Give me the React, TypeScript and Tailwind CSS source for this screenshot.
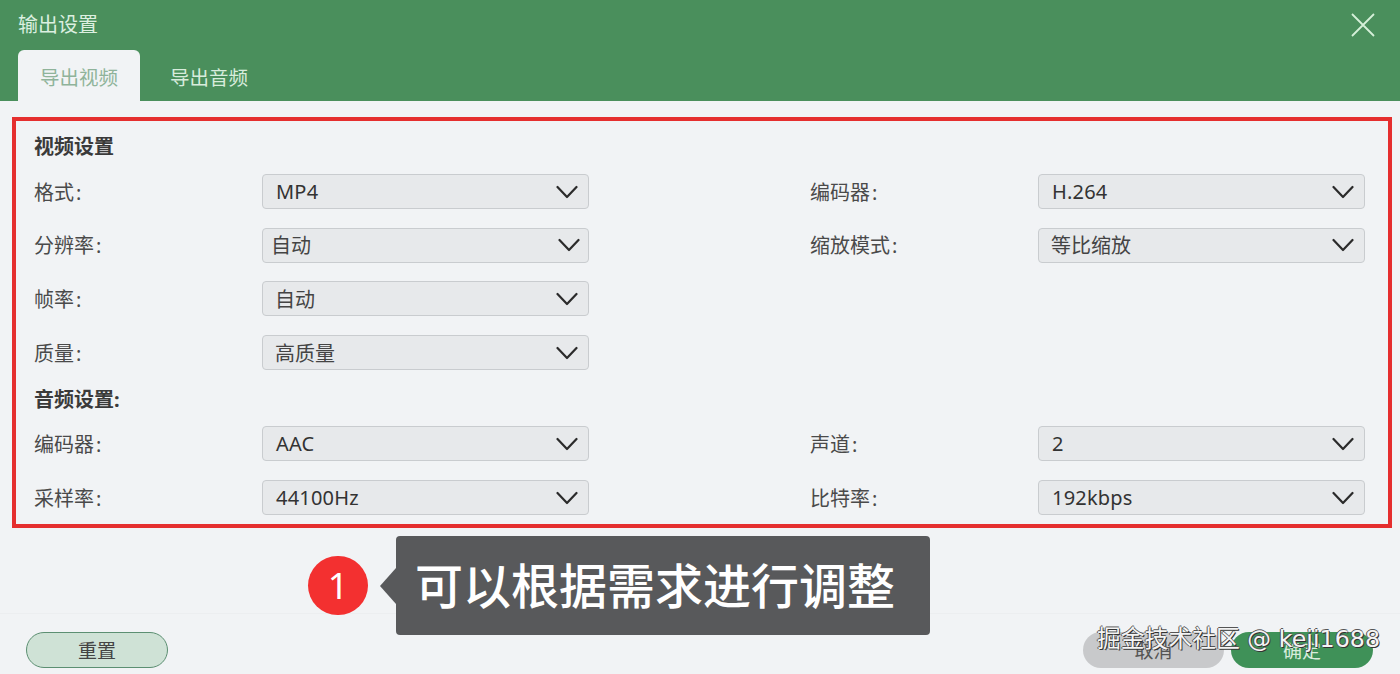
import React from "react";

const cjk = "font-['Noto_Sans','Noto_Sans_CJK_SC',sans-serif]";

function Chevron() {
  return (
    <svg width="22" height="14" viewBox="0 0 22 14" fill="none" className="shrink-0">
      <path d="M1.5 2 L11 12 L20.5 2" stroke="#2b2b2b" strokeWidth="2.2" strokeLinecap="round" strokeLinejoin="round" />
    </svg>
  );
}

function Select({ value, latin, shift }: { value: string; latin?: boolean; shift?: boolean }) {
  return (
    <div className={`flex h-[35px] w-[327px] items-center justify-between rounded-[4px] border border-[#c9cccf] bg-[#e7e9eb] ${shift ? "pl-[8px] pr-[8px]" : latin ? "pl-[13px] pr-[10px]" : "pl-[12px] pr-[10px]"}`}>
      <span className={`text-[20px] leading-none ${latin ? "tracking-[0.2px] text-[#333]" : "pt-[2px] text-[#444]"}`}>{value}</span>
      <Chevron />
    </div>
  );
}

function Field({ label, value, latin, shift }: { label: string; value: string; latin?: boolean; shift?: boolean }) {
  return (
    <div className="flex w-[555px] items-center">
      <span className="w-[228px] pt-[2px] text-[20px] leading-none text-[#4a4a4a]">
        {label}
        <span className="ml-[2px]">:</span>
      </span>
      <Select value={value} latin={latin} shift={shift} />
    </div>
  );
}

function Row({ children }: { children: React.ReactNode }) {
  return <div className="flex h-[35px] gap-[221px]">{children}</div>;
}

export default function App() {
  return (
    <div className={`relative flex h-[674px] w-[1400px] flex-col overflow-hidden bg-[#f1f3f5] ${cjk}`}>
      <header className="flex h-[101px] shrink-0 flex-col bg-[#4a8f5c]">
        <div className="flex h-[50px] items-center justify-between pl-[18px] pr-[25px]">
          <span className="text-[20px] text-[#dcefe0]">输出设置</span>
          <svg width="24" height="24" viewBox="0 0 24 24" fill="none">
            <path d="M1 1 L23 23 M23 1 L1 23" stroke="#d5f0d8" strokeWidth="1.8" />
          </svg>
        </div>
        <div className="flex h-[51px] pl-[18px]">
          <div className="flex h-[51px] w-[122px] items-center justify-center rounded-t-[6px] bg-[#f1f3f5] pt-[4px] text-[19.5px] text-[#8fb39a]">导出视频</div>
          <div className="flex h-[51px] w-[138px] items-center justify-center pt-[4px] text-[19.5px] text-[#d8ecdc]">导出音频</div>
        </div>
      </header>

      <section className="ml-[12px] mt-[16px] flex h-[411px] w-[1380px] flex-col border-[4px] border-[#e52e2e] pl-[18px] pt-[12px]">
        <h2 className="flex h-[26px] items-center pt-[2px] text-[20px] font-bold leading-none text-[#3a3a3a]">视频设置</h2>
        <div className="mt-[15px] flex flex-col gap-[18.7px]">
          <Row>
            <Field label="格式" value="MP4" latin />
            <Field label="编码器" value="H.264" latin />
          </Row>
          <Row>
            <Field label="分辨率" value="自动" shift />
            <Field label="缩放模式" value="等比缩放" />
          </Row>
          <Row>
            <Field label="帧率" value="自动" />
          </Row>
          <Row>
            <Field label="质量" value="高质量" />
          </Row>
        </div>
        <h2 className="mt-[16px] flex h-[26px] items-center pt-[2px] text-[20px] font-bold leading-none text-[#3a3a3a]">音频设置:</h2>
        <div className="mt-[14px] flex flex-col gap-[19px]">
          <Row>
            <Field label="编码器" value="AAC" latin />
            <Field label="声道" value="2" latin />
          </Row>
          <Row>
            <Field label="采样率" value="44100Hz" latin />
            <Field label="比特率" value="192kbps" latin />
          </Row>
        </div>
      </section>

      <footer className="mt-[85px] flex h-[61px] items-start justify-between border-t border-[#eceef0] pl-[26px] pr-[27px] pt-[18px]">
        <button className="flex h-[36px] w-[142px] items-center justify-center rounded-full border border-[#5c8f72] bg-[#cfe2d6] pt-[2px] text-[19px] text-[#444]">重置</button>
        <div className="flex gap-[7px]">
          <button className="flex h-[36px] w-[141px] items-center justify-center rounded-full bg-[#c8c9cb] pt-[2px] text-[19px] text-[#555]">取消</button>
          <button className="flex h-[36px] w-[142px] items-center justify-center rounded-full bg-[#3f9158] pt-[2px] text-[19px] text-[#d8ecdc]">确定</button>
        </div>
      </footer>

      <div className="absolute left-[308px] top-[556px] flex h-[59px] w-[60px] items-center justify-center rounded-full bg-[#f33030] text-[36px] leading-none text-white">1</div>
      <div className="absolute left-[380px] top-[568px] h-0 w-0 border-y-[18px] border-r-[16px] border-y-transparent border-r-[#58595b]" />
      <div className="absolute left-[396px] top-[536px] flex h-[99px] w-[534px] items-center rounded-[4px] bg-[#58595b] pl-[19px] text-[48px] font-medium leading-none text-white">可以根据需求进行调整</div>

      <div className="absolute left-[1097px] top-[624px] whitespace-nowrap font-['DejaVu_Sans','Noto_Sans_CJK_SC',sans-serif] text-[23.8px] leading-[30px] text-[#f4f4f4] [text-shadow:1px_1px_0_#333,-1px_0_0_#555,0_-1px_0_#555]">掘金技术社区 @ keji1688</div>
    </div>
  );
}
